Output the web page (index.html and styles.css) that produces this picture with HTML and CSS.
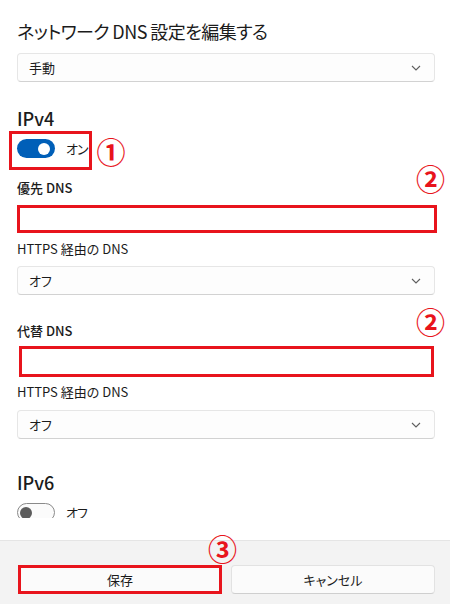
FILE: index.html
```html
<!DOCTYPE html>
<html lang="ja">
<head>
<meta charset="utf-8">
<title>DNS 設定</title>
<link rel="stylesheet" href="styles.css">
</head>
<body>
<div class="dialog">
  <div class="scroll">
    <h1 class="title">ネットワーク DNS 設定を編集する</h1>
    <div class="select sel-mode">
      <span class="sel-text">手動</span>
      <svg class="chev" width="10" height="6" viewBox="0 0 10 6"><path d="M1 1 L5 5 L9 1" fill="none" stroke="#5f5f5f" stroke-width="1.1"/></svg>
    </div>

    <h2 class="section sec-v4">IPv4</h2>
    <div class="toggle-line">
      <div class="mark-box toggle-row">
        <span class="toggle on"><span class="knob"></span></span>
        <span class="toggle-label">オン</span>
      </div>
      <span class="num num-inline">①</span>
    </div>

    <div class="field field-pref">
      <div class="label strong">優先 DNS</div>
      <span class="num num-right">②</span>
      <div class="input mark input-pref"></div>
    </div>
    <div class="label lbl-https">HTTPS 経由の DNS</div>
    <div class="select sel-https">
      <span class="sel-text">オフ</span>
      <svg class="chev" width="10" height="6" viewBox="0 0 10 6"><path d="M1 1 L5 5 L9 1" fill="none" stroke="#5f5f5f" stroke-width="1.1"/></svg>
    </div>

    <div class="field field-alt">
      <div class="label strong">代替 DNS</div>
      <span class="num num-right">②</span>
      <div class="input mark input-alt"></div>
    </div>
    <div class="label lbl-https2">HTTPS 経由の DNS</div>
    <div class="select sel-https2">
      <span class="sel-text">オフ</span>
      <svg class="chev" width="10" height="6" viewBox="0 0 10 6"><path d="M1 1 L5 5 L9 1" fill="none" stroke="#5f5f5f" stroke-width="1.1"/></svg>
    </div>

    <h2 class="section sec-v6">IPv6</h2>
    <div class="toggle-row plain">
      <span class="toggle off"><span class="knob"></span></span>
      <span class="toggle-label">オフ</span>
    </div>
  </div>

  <div class="footer">
    <span class="num num-footer">③</span>
    <div class="buttons">
      <button class="btn mark-btn">保存</button>
      <button class="btn">キャンセル</button>
    </div>
  </div>
</div>
</body>
</html>
```

FILE: styles.css
```css
* { box-sizing: border-box; }

html, body {
  margin: 0;
  padding: 0;
  background: #ffffff;
}

body {
  width: 450px;
  height: 604px;
  overflow: hidden;
  font-family: "Noto Sans CJK JP", "Noto Sans", sans-serif;
  font-feature-settings: "palt";
  color: #1b1b1b;
}

.dialog {
  display: flex;
  flex-direction: column;
  height: 604px;
}

.scroll {
  flex: none;
  height: 518px;
  overflow: hidden;
  padding: 19px 15px 0 17px;
}

.title {
  margin: 0;
  font-size: 18px;
  line-height: 24px;
  font-weight: 400;
  letter-spacing: -0.55px;
}

.select {
  height: 29px;
  border: 1px solid #e6e6e6;
  border-bottom-color: #d2d2d2;
  border-radius: 4px;
  background: #fdfdfd;
  display: flex;
  align-items: center;
  justify-content: space-between;
  padding: 0 13px 0 11px;
  font-size: 13px;
}

.sel-text {
  line-height: 18px;
}

.chev { display: block; }

.sel-mode { margin-top: 10px; }

.section {
  margin: 0;
  font-size: 18px;
  line-height: 24px;
  font-weight: 500;
}

.sec-v4 { margin-top: 24px; }
.sec-v6 { margin-top: 31px; }

.toggle-line {
  display: flex;
  align-items: center;
  margin-top: 1px;
  gap: 5px;
}

.toggle-row {
  display: flex;
  align-items: center;
  gap: 11px;
}

.mark-box {
  border: 3px solid #e8141c;
  padding: 5px 1px 9px 5px;
  margin-left: -8px;
}

.plain { margin-top: 9px; }

.toggle {
  width: 38px;
  height: 19px;
  border-radius: 10px;
  display: flex;
  align-items: center;
  flex: none;
}

.toggle.on {
  background: #005fb8;
  justify-content: flex-end;
  padding-right: 5px;
}

.toggle.off {
  border: 1px solid #8a8a8a;
  background: #fbfbfb;
  padding-left: 2px;
}

.knob {
  width: 12px;
  height: 12px;
  border-radius: 50%;
  background: #ffffff;
}

.toggle.off .knob { background: #5c5c5c; }

.toggle-label {
  font-size: 13px;
  line-height: 18px;
  letter-spacing: -1px;
}

.num {
  color: #e8141c;
  font-size: 29px;
  line-height: 30px;
  font-weight: 700;
}

.field {
  position: relative;
  display: flex;
  flex-direction: column;
}

.field-pref { margin-top: 9px; }
.field-alt { margin-top: 27px; }

.label {
  font-size: 13px;
  line-height: 18px;
}

.strong { font-weight: 500; }

.num-right {
  position: absolute;
  right: -10px;
  top: -16px;
}

.input {
  background: #ffffff;
  border: 3px solid #e8141c;
}

.input-pref {
  margin-top: 8px;
  height: 28px;
  margin-right: -2px;
}

.input-alt {
  margin-top: 6px;
  height: 31px;
  margin-left: 2px;
  margin-right: 1px;
}

.lbl-https { margin-top: 7px; }
.sel-https { margin-top: 8px; }
.lbl-https2 { margin-top: 6px; }
.sel-https2 { margin-top: 9px; }

.footer {
  position: relative;
  margin-top: 22px;
  flex: 1;
  background: #f3f3f3;
  border-top: 1px solid #e5e5e5;
  padding: 24px 15px 0 18px;
}

.num-footer {
  position: absolute;
  left: 208px;
  top: -8px;
}

.buttons {
  display: grid;
  grid-template-columns: 1fr 1fr;
  gap: 9px;
}

.btn {
  height: 29px;
  font-family: inherit;
  font-feature-settings: "palt";
  font-size: 13px;
  color: #1b1b1b;
  background: #fbfbfb;
  border: 1px solid #e2e2e2;
  border-bottom-color: #cfcfcf;
  border-radius: 4px;
  padding: 0;
}

.mark-btn {
  border: 3px solid #e8141c;
  border-radius: 0;
}
```
